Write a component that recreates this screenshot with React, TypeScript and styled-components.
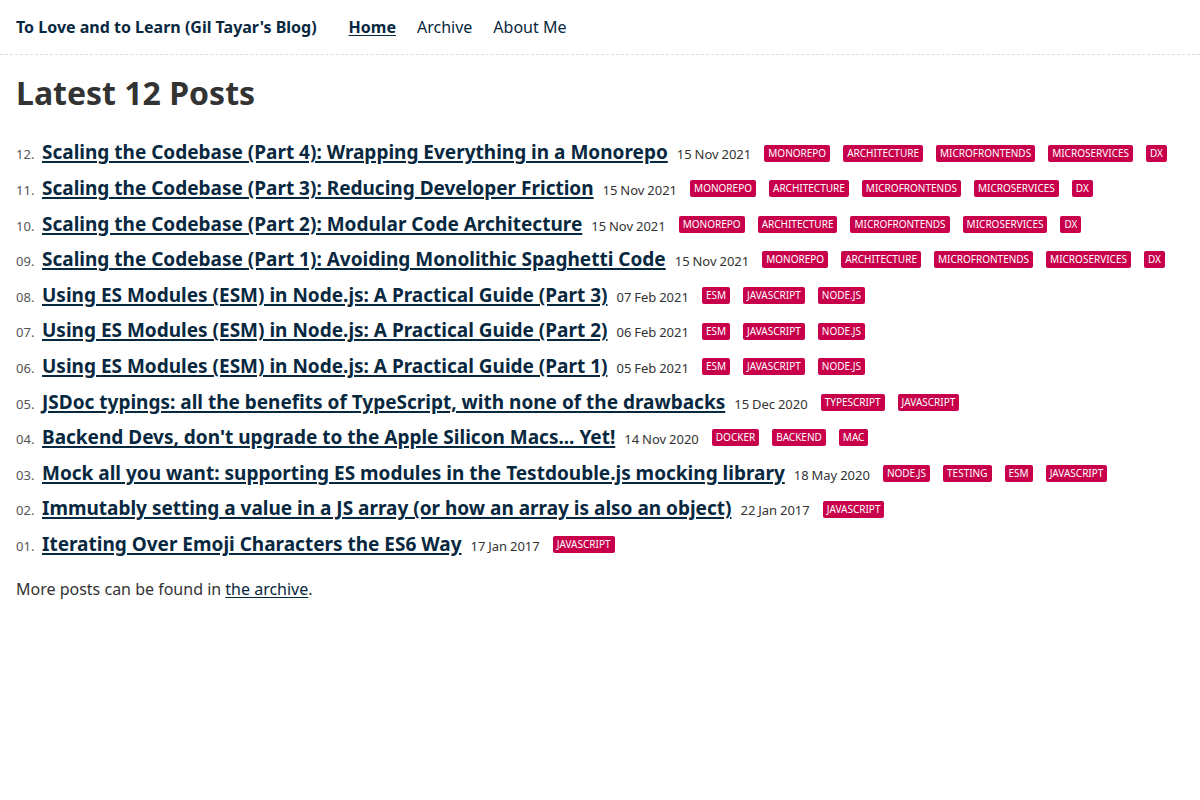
import React from 'react'
import styled, {createGlobalStyle} from 'styled-components';

const GlobalStyle = createGlobalStyle `
  body {
    margin: 0;
    font-family: "Noto Sans", "Open Sans", sans-serif;
    color: #333;
    background: #fff;
    line-height: 1.5;
  }
`;

const Header = styled.header `
  display: flex;
  align-items: center;
  border-bottom: 1px dashed #ddd;
  padding: 15px 16px;
`;

const HomeLink = styled.a `
  font-size: 16px;
  font-weight: 700;
  color: #082840;
  text-decoration: none;
`;

const Nav = styled.ul `
  display: flex;
  gap: 21px;
  margin: 0 0 0 32px;
  padding: 0;
  list-style: none;
`;

const NavLink = styled.a<{active?: boolean}> `
  font-size: 16px;
  color: #082840;
  font-weight: ${p => p.active ? 700 : 400};
  text-decoration: ${p => p.active ? 'underline' : 'none'};
  text-underline-offset: 2px;
`;

const Main = styled.main `
  padding: 0 16px;
`;

const Title = styled.h1 `
  font-size: 32px;
  font-weight: 700;
  line-height: 1.2;
  margin: 19px 0 23px;
`;

const PostList = styled.ol `
  list-style: none;
  padding: 0;
  margin: 0 0 14px;
`;

const PostItem = styled.li `
  display: flex;
  flex-wrap: wrap;
  align-items: baseline;
`;

const PostNumber = styled.span `
  font-size: 13px;
  line-height: 1;
  color: #555;
  width: 22px;
`;

const PostLink = styled.a `
  font-size: 19px;
  line-height: 35.6px;
  font-weight: 700;
  color: #082840;
  padding: 0 9px 0 4px;
  text-decoration-thickness: 1.5px;
  text-underline-offset: 2px;
`;

const PostDate = styled.span `
  font-size: 13px;
  line-height: 1;
  color: #333;
  word-spacing: -0.5px;
`;

const Tag = styled.a `
  align-self: center;
  display: inline-flex;
  align-items: center;
  font-size: 10px;
  line-height: 17px;
  padding: 0 4px;
  margin-left: 13px;
  background: #c8004b;
  color: #fff;
  border-radius: 2px;
  text-transform: uppercase;
  text-decoration: none;
`;

const Footer = styled.p `
  font-size: 16px;
  margin: 0;
`;

const ArchiveLink = styled.a `
  color: #082840;
  text-underline-offset: 2px;
`;

interface Post {
    title: string,
    date: string,
    tags: string[]
}

const scalingTags = ['monorepo', 'architecture', 'microfrontends', 'microservices', 'dx'];
const esmTags = ['esm', 'javascript', 'node.js'];

const posts : Post[] = [
    {title: 'Scaling the Codebase (Part 4): Wrapping Everything in a Monorepo', date: '15 Nov 2021', tags: scalingTags},
    {title: 'Scaling the Codebase (Part 3): Reducing Developer Friction', date: '15 Nov 2021', tags: scalingTags},
    {title: 'Scaling the Codebase (Part 2): Modular Code Architecture', date: '15 Nov 2021', tags: scalingTags},
    {title: 'Scaling the Codebase (Part 1): Avoiding Monolithic Spaghetti Code', date: '15 Nov 2021', tags: scalingTags},
    {title: 'Using ES Modules (ESM) in Node.js: A Practical Guide (Part 3)', date: '07 Feb 2021', tags: esmTags},
    {title: 'Using ES Modules (ESM) in Node.js: A Practical Guide (Part 2)', date: '06 Feb 2021', tags: esmTags},
    {title: 'Using ES Modules (ESM) in Node.js: A Practical Guide (Part 1)', date: '05 Feb 2021', tags: esmTags},
    {title: 'JSDoc typings: all the benefits of TypeScript, with none of the drawbacks', date: '15 Dec 2020', tags: ['typescript', 'javascript']},
    {title: "Backend Devs, don't upgrade to the Apple Silicon Macs... Yet!", date: '14 Nov 2020', tags: ['docker', 'backend', 'mac']},
    {title: 'Mock all you want: supporting ES modules in the Testdouble.js mocking library', date: '18 May 2020', tags: ['node.js', 'testing', 'esm', 'javascript']},
    {title: 'Immutably setting a value in a JS array (or how an array is also an object)', date: '22 Jan 2017', tags: ['javascript']},
    {title: 'Iterating Over Emoji Characters the ES6 Way', date: '17 Jan 2017', tags: ['javascript']},
];

export default function App() {
    return (
        <div>
            <GlobalStyle/>
            <Header>
                <HomeLink href="#">To Love and to Learn (Gil Tayar's Blog)</HomeLink>
                <Nav>
                    <li><NavLink href="#" active>Home</NavLink></li>
                    <li><NavLink href="#">Archive</NavLink></li>
                    <li><NavLink href="#">About Me</NavLink></li>
                </Nav>
            </Header>
            <Main>
                <Title>Latest 12 Posts</Title>
                <PostList>
                    {posts.map((post, i) => {
                        const n = String(posts.length - i).padStart(2, '0');
                        return (
                            <PostItem key={n}>
                                <PostNumber>{n}.</PostNumber>
                                <PostLink href="#">{post.title}</PostLink>
                                <PostDate>{post.date}</PostDate>
                                {post.tags.map(tag => <Tag key={tag} href="#">{tag}</Tag>)}
                            </PostItem>
                        )
                    })}
                </PostList>
                <Footer>More posts can be found in <ArchiveLink href="#">the archive</ArchiveLink>.</Footer>
            </Main>
        </div>
    )
}
